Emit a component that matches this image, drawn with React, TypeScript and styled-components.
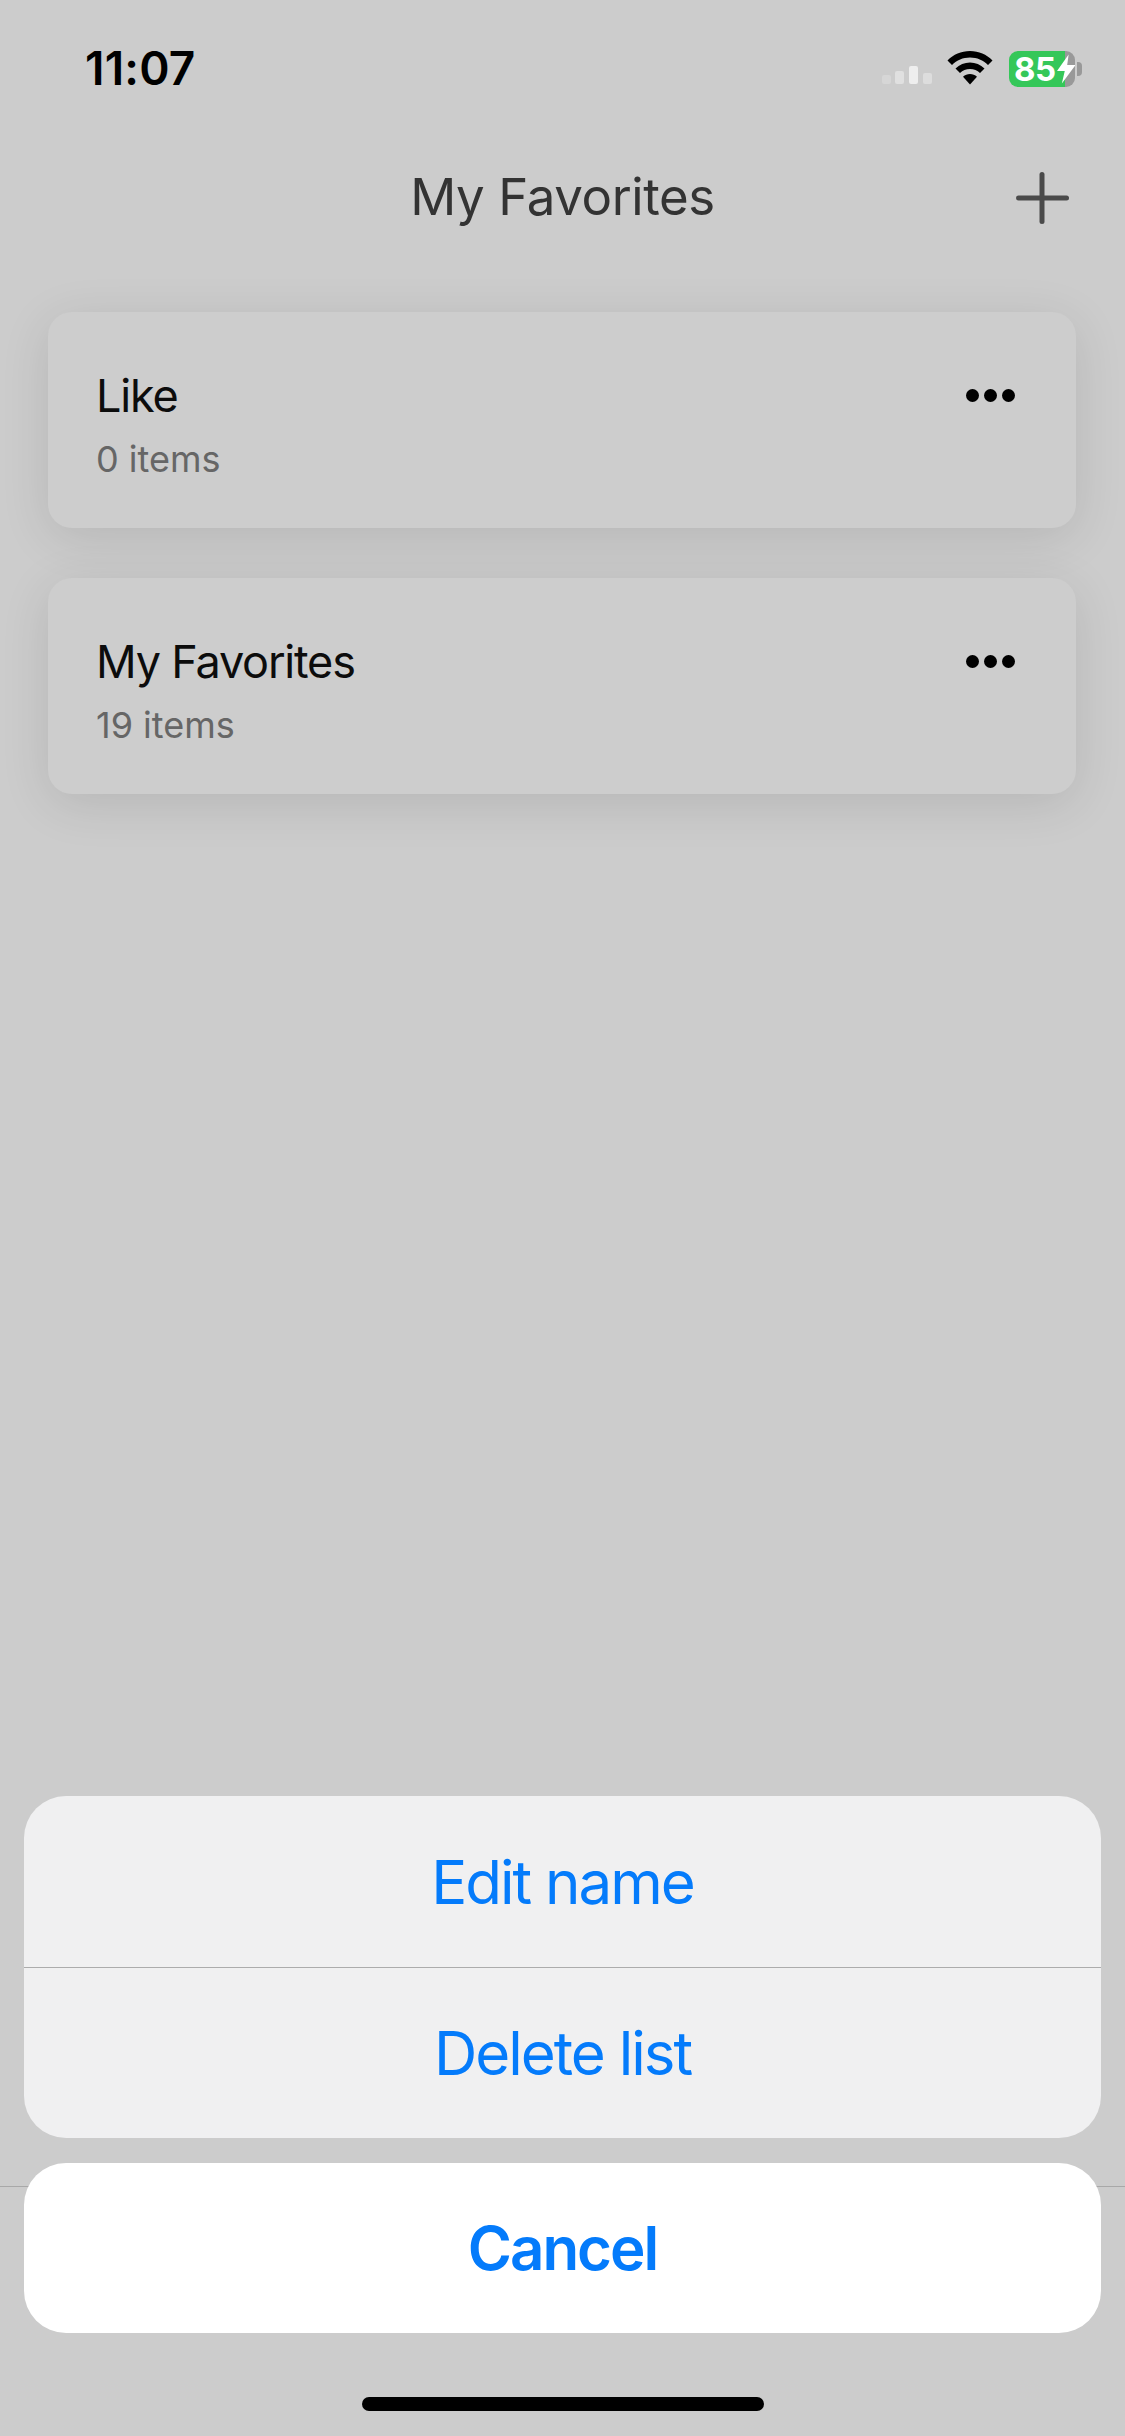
import styled, { createGlobalStyle } from 'styled-components';

const GlobalStyle = createGlobalStyle`
  html, body {
    margin: 0;
    padding: 0;
    background: #cccccc;
  }
  * {
    box-sizing: border-box;
  }
`;

const Page = styled.div`
  position: relative;
  width: 1125px;
  height: 2436px;
  overflow: hidden;
  background: #cccccc;
  font-family: Inter, 'Liberation Sans', sans-serif;
  display: flex;
  flex-direction: column;
`;

const StatusBar = styled.div`
  height: 134px;
  padding: 44px 43px 0 85px;
  display: flex;
  justify-content: space-between;
  align-items: flex-start;
`;

const Time = styled.span`
  font-size: 46px;
  line-height: 48px;
  font-weight: 600;
  color: #000;
  letter-spacing: 0.2px;
`;

const StatusIcons = styled.div`
  display: flex;
  align-items: flex-start;
  padding-top: 7px;
`;

const Battery = styled.div`
  width: 66px;
  height: 36px;
  margin-left: 16px;
  border-radius: 9px;
  background: linear-gradient(to right, #35c759 85%, #999999 85%);
  display: flex;
  align-items: center;
  padding-left: 5px;
  position: relative;
  color: #fff;
  font-size: 33px;
  font-weight: 700;
  line-height: 36px;
  letter-spacing: -0.5px;
`;

const BatteryNub = styled.div`
  width: 5px;
  height: 14px;
  margin: 11px 0 0 2px;
  border-radius: 0 4px 4px 0;
  background: #999999;
`;

const NavBar = styled.div`
  height: 126px;
  padding: 0 56px;
  display: flex;
  align-items: center;
  justify-content: center;
  position: relative;
`;

const NavTitle = styled.h1`
  margin: 0;
  font-size: 51px;
  line-height: 60px;
  font-weight: 400;
  color: #333333;
  letter-spacing: -0.4px;
`;

const AddIcon = styled.svg`
  position: absolute;
  right: 56px;
  top: 38px;
`;

const List = styled.div`
  padding: 52px 49px 0 48px;
  display: flex;
  flex-direction: column;
  gap: 50px;
`;

const Card = styled.div`
  height: 216px;
  border-radius: 24px;
  background: #cdcdcd;
  box-shadow: 0 10px 50px rgba(0, 0, 0, 0.11);
  padding: 57px 61px 0 48px;
  display: flex;
  justify-content: space-between;
  align-items: flex-start;
`;

const CardName = styled.div`
  font-size: 45px;
  line-height: 54px;
  color: #0c0c0c;
  letter-spacing: -1.2px;
`;

const CardCount = styled.div`
  margin-top: 15px;
  font-size: 36px;
  line-height: 42px;
  color: #666666;
`;

const Dots = styled.div`
  display: flex;
  gap: 5px;
  margin-top: 20px;
`;

const Dot = styled.span`
  width: 13px;
  height: 13px;
  border-radius: 50%;
  background: #000;
`;

const TabBarLine = styled.div`
  position: absolute;
  left: 0;
  right: 0;
  top: 2186px;
  height: 1px;
  background: #a8a8a8;
`;

const Sheet = styled.div`
  position: absolute;
  left: 24px;
  right: 24px;
  top: 1796px;
  display: flex;
  flex-direction: column;
  gap: 25px;
`;

const ActionGroup = styled.div<{ $cancel?: boolean }>`
  border-radius: 42px;
  overflow: hidden;
  background: ${(p) => (p.$cancel ? '#ffffff' : '#f0f0f1')};
`;

const ActionButton = styled.div<{ $cancel?: boolean; $split?: boolean }>`
  height: ${(p) => (p.$cancel ? '170px' : '171px')};
  display: flex;
  align-items: center;
  justify-content: center;
  font-size: 60px;
  font-weight: ${(p) => (p.$cancel ? 600 : 400)};
  color: #047bfb;
  letter-spacing: -2px;
  border-top: ${(p) => (p.$split ? '1px solid #acacac' : 'none')};
`;

const HomeIndicator = styled.div`
  position: absolute;
  left: 362px;
  top: 2397px;
  width: 402px;
  height: 14px;
  border-radius: 7px;
  background: #000;
`;

const cards = [
  { name: 'Like', count: '0 items' },
  { name: 'My Favorites', count: '19 items' },
];

function App() {
  return (
    <Page>
      <GlobalStyle />
      <StatusBar>
        <Time>11:07</Time>
        <StatusIcons>
          <svg width="50" height="19" viewBox="0 0 50 19" style={{ marginTop: 15, marginRight: 15 }}>
            <rect x="0" y="9" width="9" height="9" rx="2" fill="#d6d6d6" />
            <rect x="13" y="5" width="9" height="13" rx="2" fill="#e0e0e0" />
            <rect x="27" y="0" width="9" height="18" rx="2" fill="#eeeeee" />
            <rect x="41" y="7" width="9" height="11" rx="2" fill="#dddddd" />
          </svg>
          <svg width="46" height="34" viewBox="0 0 46 34">
            <path d="M23 0C14 0 6.500 3.500 0.500 9.500L5 14C9.800 9.200 16 6.500 23 6.500C30 6.500 36.200 9.200 41 14L45.500 9.500C39.500 3.500 32 0 23 0Z" fill="#000" />
            <path d="M23 11.500C17.500 11.500 12.500 13.600 8.500 17.500L13 22C15.700 19.400 19 18 23 18C27 18 30.300 19.400 33 22L37.500 17.500C33.500 13.600 28.500 11.500 23 11.500Z" fill="#000" />
            <path d="M23 23C20.300 23 18 24 16 25.800L23 33.500L30 25.800C28 24 25.700 23 23 23Z" fill="#000" />
          </svg>
          <Battery>
            85
            <svg width="19" height="30" viewBox="0 0 19 30" style={{ marginLeft: 1 }}>
              <path d="M12 0L0 17H8L5 30L19 11H10.500Z" fill="#fff" />
            </svg>
          </Battery>
          <BatteryNub />
        </StatusIcons>
      </StatusBar>
      <NavBar>
        <NavTitle>My Favorites</NavTitle>
        <AddIcon width="53" height="52" viewBox="0 0 53 52">
          <rect x="23.500" y="0" width="5" height="52" rx="2.500" fill="#4a4a4a" />
          <rect x="0" y="23.500" width="53" height="5" rx="2.500" fill="#4a4a4a" />
        </AddIcon>
      </NavBar>
      <List>
        {cards.map((card) => (
          <Card key={card.name}>
            <div>
              <CardName>{card.name}</CardName>
              <CardCount>{card.count}</CardCount>
            </div>
            <Dots>
              <Dot />
              <Dot />
              <Dot />
            </Dots>
          </Card>
        ))}
      </List>
      <TabBarLine />
      <Sheet>
        <ActionGroup>
          <ActionButton>Edit name</ActionButton>
          <ActionButton $split>Delete list</ActionButton>
        </ActionGroup>
        <ActionGroup $cancel>
          <ActionButton $cancel>Cancel</ActionButton>
        </ActionGroup>
      </Sheet>
      <HomeIndicator />
    </Page>
  );
}

export default App;
